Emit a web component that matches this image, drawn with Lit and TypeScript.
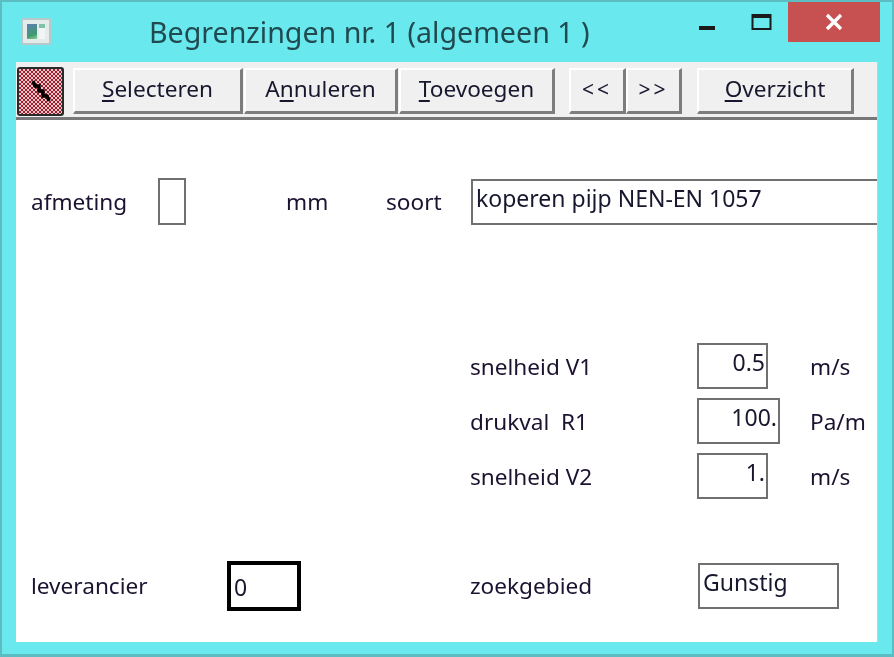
import { LitElement, html, css } from "lit";
import { customElement } from "lit/decorators.js";

@customElement("app-root")
export class AppRoot extends LitElement {
  static styles = css`
    :host {
      display: block;
      width: 894px;
      height: 657px;
      font-family: "Noto Sans", "Open Sans", sans-serif;
      color: #1c1230;
    }
    * { box-sizing: border-box; }
    .window {
      width: 894px;
      height: 657px;
      background: #69e9ee;
      border: 2px solid #5bbcc2;
      border-bottom-width: 3px;
      display: flex;
      flex-direction: column;
      padding: 0 14px 12px 14px;
      filter: blur(0.45px);
    }
    .titlebar {
      height: 60px;
      flex: none;
      display: flex;
      align-items: flex-start;
    }
    .appicon {
      width: 30px;
      height: 27px;
      margin: 16px 0 0 5px;
      flex: none;
      display: flex;
      gap: 2px;
      padding: 4px;
      background: #e4eceb;
      border: 2px solid #b9c9ca;
      border-radius: 2px;
    }
    .appicon .a {
      width: 10px;
      background: linear-gradient(160deg, #5f7fb0, #3f9a70 70%, #8fce9a);
    }
    .appicon .b {
      flex: 1;
      background: linear-gradient(180deg, #7cc3a8 0 30%, #f2f5f4 30%);
    }
    .title {
      margin: 11px 0 0 98px;
      font-size: 28.6px;
      line-height: 38px;
      color: #204a50;
      white-space: nowrap;
      flex: none;
      width: 460px;
    }
    .controls {
      margin-left: auto;
      display: flex;
      align-items: flex-start;
      flex: none;
    }
    .ctl { display: flex; align-items: center; justify-content: center; }
    .ctl svg { display: block; }
    .min { width: 18px; height: 20px; margin: 16px 35px 0 0; }
    .max { width: 22px; height: 18px; margin: 11px 15px 0 0; }
    .close {
      width: 92px;
      height: 40px;
      background: #c75050;
      margin-right: -2px;
    }
    .client {
      flex: 1;
      min-height: 0;
      background: #fff;
      display: flex;
      flex-direction: column;
      border-right: 1px solid #9fdfe3;
      overflow: hidden;
    }
    .toolbar {
      height: 58px;
      flex: none;
      background: #f0f0f0;
      border-bottom: 3px solid #77777a;
      display: flex;
      align-items: flex-start;
      padding: 6px 0 0 1px;
    }
    .tool {
      width: 47px;
      height: 49px;
      margin-top: -1px;
      flex: none;
      border: 2px solid #2a2a2a;
      border-radius: 3px;
      background-color: #fff;
      background-image: conic-gradient(#a01c2c 25%, #e8c8c8 0 50%, #a01c2c 0 75%, #e8c8c8 0);
      background-size: 4px 4px;
      display: flex;
      align-items: center;
      justify-content: center;
    }
    .btn {
      height: 46px;
      flex: none;
      background: #f0f0f0;
      border-top: 2px solid #fff;
      border-left: 2px solid #fff;
      border-right: 3px solid #7d7d7d;
      border-bottom: 3px solid #7d7d7d;
      font-size: 22.6px;
      line-height: 38px;
      text-align: center;
      color: #17172e;
      white-space: nowrap;
    }
    .btn u { text-decoration-thickness: 2px; text-underline-offset: 3px; }
    .w-sel { width: 170px; margin-left: 9px; }
    .w-ann { width: 154px; margin-left: 1px; }
    .w-toe { width: 156px; margin-left: 1px; }
    .w-prev { width: 57px; margin-left: 14px; letter-spacing: 3px; font-size: 21px; }
    .w-next { width: 56px; letter-spacing: 3px; font-size: 21px; }
    .w-ove { width: 157px; margin-left: 15px; }

    .form {
      flex: 1;
      position: relative;
      display: flex;
      flex-direction: column;
      font-size: 22.6px;
      padding-left: 15px;
    }
    .row { display: flex; align-items: center; }
    .label { white-space: nowrap; flex: none; }
    .box {
      flex: none;
      border: 2px solid #707070;
      background: #fff;
      font-size: 23px;
      line-height: 34px;
      white-space: nowrap;
      color: #17172e;
    }
    .row1 { margin-top: 58px; height: 47px; }
    .row1 .l1 { width: 127px; }
    .afm { width: 28px; height: 47px; }
    .mm { margin-left: 100px; width: 100px; }
    .soort { width: 85px; }
    .wide {
      flex: 1;
      height: 46px;
      border-right: none;
      padding-left: 3px;
    }
    .speed {
      margin-top: 118px;
      margin-left: 439px;
      display: grid;
      grid-template-columns: 227px 113px auto;
      row-gap: 9px;
      align-items: center;
    }
    .num {
      height: 46px;
      width: 71px;
      text-align: right;
      padding-right: 1px;
    }
    .num.big { width: 83px; }
    .bottom { margin-top: 62px; height: 49px; }
    .bottom .l1 { width: 196px; }
    .lev {
      width: 74px;
      height: 50px;
      border: 4px solid #000;
      padding-left: 3px;
      line-height: 44px;
    }
    .zoek { margin-left: 169px; width: 228px; }
    .gun {
      width: 141px;
      height: 46px;
      padding-left: 3px;
    }
  `;

  render() {
    return html`
      <div class="window">
        <div class="titlebar">
          <div class="appicon"><div class="a"></div><div class="b"></div></div>
          <div class="title">Begrenzingen nr. 1 (algemeen 1 )</div>
          <div class="controls">
            <div class="ctl min">
              <svg width="18" height="20" viewBox="0 0 18 20"><rect x="1" y="8" width="16" height="4" fill="#1a1a1a"/></svg>
            </div>
            <div class="ctl max">
              <svg width="22" height="18" viewBox="0 0 22 18"><rect x="1.5" y="2" width="18" height="14" fill="none" stroke="#1a1a1a" stroke-width="2"/><rect x="1" y="1" width="19" height="4" fill="#1a1a1a"/></svg>
            </div>
            <div class="ctl close">
              <svg width="18" height="18" viewBox="0 0 18 18"><path d="M2 2 L16 16 M16 2 L2 16" stroke="#fff" stroke-width="3.4" fill="none"/></svg>
            </div>
          </div>
        </div>
        <div class="client">
          <div class="toolbar">
            <div class="tool">
              <svg width="24" height="26" viewBox="0 0 24 26"><path d="M4 2 L6 7 L10 7 L10 12 L14 12 L14 17 L18 17 L20 22" stroke="#000" stroke-width="3.4" fill="none"/></svg>
            </div>
            <div class="btn w-sel"><u>S</u>electeren</div>
            <div class="btn w-ann">A<u>n</u>nuleren</div>
            <div class="btn w-toe"><u>T</u>oevoegen</div>
            <div class="btn w-prev">&lt;&lt;</div>
            <div class="btn w-next">&gt;&gt;</div>
            <div class="btn w-ove"><u>O</u>verzicht</div>
          </div>
          <div class="form">
            <div class="row row1">
              <div class="label l1">afmeting</div>
              <div class="box afm"></div>
              <div class="label mm">mm</div>
              <div class="label soort">soort</div>
              <div class="box wide">koperen pijp NEN-EN 1057</div>
            </div>
            <div class="speed">
              <div class="label">snelheid V1</div>
              <div class="box num">0.5</div>
              <div class="label">m/s</div>
              <div class="label">drukval&nbsp; R1</div>
              <div class="box num big">100.</div>
              <div class="label">Pa/m</div>
              <div class="label">snelheid V2</div>
              <div class="box num">1.</div>
              <div class="label">m/s</div>
            </div>
            <div class="row bottom">
              <div class="label l1">leverancier</div>
              <div class="box lev">0</div>
              <div class="label zoek">zoekgebied</div>
              <div class="box gun">Gunstig</div>
            </div>
          </div>
        </div>
      </div>
    `;
  }
}
